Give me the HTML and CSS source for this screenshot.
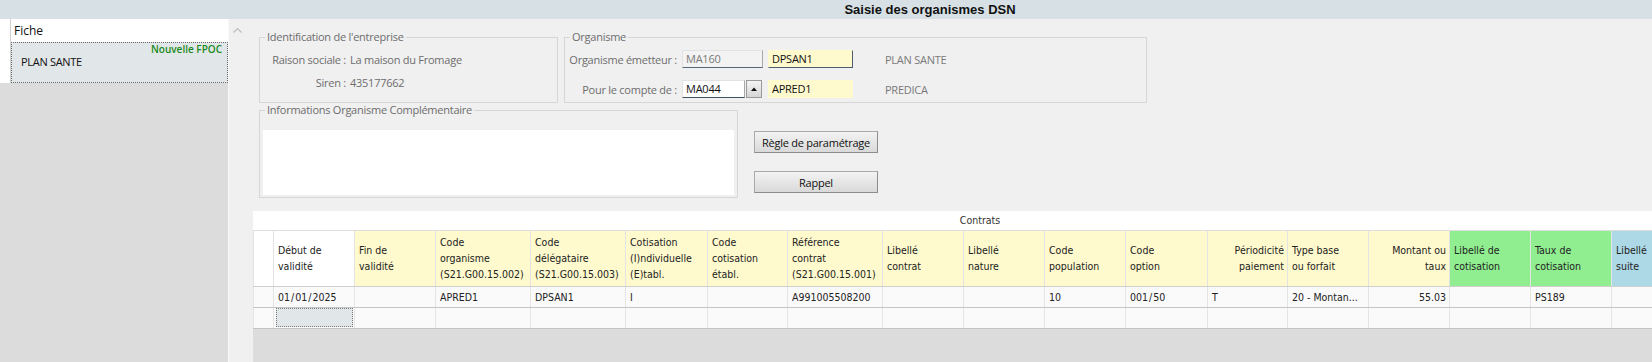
FILE: index.html
```html
<!DOCTYPE html>
<html>
    <head>
        <meta charset="utf-8">
        <title>Saisie des organismes DSN</title>
        <link rel="stylesheet" href="styles.css">
    </head>
    <body>
        <div class="titlebar">Saisie des organismes DSN</div>

        <div class="main">
            <!-- liste des fiches -->
            <div class="sidebar">
                <div class="side_head">
                    <span class="side_gutter"></span>
                    <span class="side_title">Fiche</span>
                </div>
                <div class="side_row">
                    <span class="side_gutter"></span>
                    <div class="fiche">
                        <span class="fiche_tag">Nouvelle FPOC</span>
                        <span class="fiche_name">PLAN SANTE</span>
                    </div>
                </div>
            </div>

            <div class="content">
                <svg class="scroll_up" width="9" height="6" viewBox="0 0 9 6"><polyline points="0.5,5.5 4.5,1.5 8.5,5.5" fill="none" stroke="#bdbdbd" stroke-width="1.2"/></svg>

                <div class="form_row">
                    <fieldset class="box box_ident">
                        <legend>Identification de l'entreprise</legend>
                        <div class="ident_line"><span class="lbl">Raison sociale :</span><span class="val">La maison du Fromage</span></div>
                        <div class="ident_line"><span class="lbl">Siren :</span><span class="val">435177662</span></div>
                    </fieldset>

                    <fieldset class="box box_org">
                        <legend>Organisme</legend>
                        <div class="org_line">
                            <span class="lbl">Organisme émetteur :</span>
                            <span class="field f_code f_disabled">MA160</span>
                            <span class="field f_yellow f_edged">DPSAN1</span>
                            <span class="org_name">PLAN SANTE</span>
                        </div>
                        <div class="org_line">
                            <span class="lbl">Pour le compte de :</span>
                            <span class="field f_combo">MA044</span>
                            <span class="spin"><svg width="14" height="16" viewBox="0 0 14 16"><polygon points="4,10 7,6.5 10,10" fill="#111"/></svg></span>
                            <span class="field f_yellow f_after_spin">APRED1</span>
                            <span class="org_name">PREDICA</span>
                        </div>
                    </fieldset>
                </div>

                <div class="form_row2">
                    <fieldset class="box box_info">
                        <legend>Informations Organisme Complémentaire</legend>
                        <div class="info_text"></div>
                    </fieldset>
                    <div class="buttons">
                        <button>Règle de paramétrage</button>
                        <button>Rappel</button>
                    </div>
                </div>

                <!-- grille des contrats -->
                <div class="grid">
                    <div class="grid_caption">Contrats</div>
                    <table>
                        <colgroup>
                            <col style="width:20px"><col style="width:81px"><col style="width:81px"><col style="width:95px">
                            <col style="width:95px"><col style="width:82px"><col style="width:80px"><col style="width:95px">
                            <col style="width:81px"><col style="width:81px"><col style="width:81px"><col style="width:82px">
                            <col style="width:80px"><col style="width:81px"><col style="width:81px"><col style="width:81px">
                            <col style="width:81px"><col style="width:81px">
                        </colgroup>
                        <tr>
                            <th class="h_white"></th>
                            <th class="h_white">Début de<br>validité</th>
                            <th>Fin de<br>validité</th>
                            <th>Code<br>organisme<br>(S21.G00.15.002)</th>
                            <th>Code<br>délégataire<br>(S21.G00.15.003)</th>
                            <th>Cotisation<br>(I)ndividuelle<br>(E)tabl.</th>
                            <th>Code<br>cotisation<br>établ.</th>
                            <th>Référence<br>contrat<br>(S21.G00.15.001)</th>
                            <th>Libellé<br>contrat</th>
                            <th>Libellé<br>nature</th>
                            <th>Code<br>population</th>
                            <th>Code<br>option</th>
                            <th class="right">Périodicité<br>paiement</th>
                            <th>Type base<br>ou forfait</th>
                            <th class="right">Montant ou<br>taux</th>
                            <th class="h_green">Libellé de<br>cotisation</th>
                            <th class="h_green">Taux de<br>cotisation</th>
                            <th class="h_blue">Libellé<br>suite</th>
                        </tr>
                        <tr>
                            <td></td>
                            <td>01<span class="slash">/</span>01<span class="slash">/</span>2025</td>
                            <td></td>
                            <td>APRED1</td>
                            <td>DPSAN1</td>
                            <td>I</td>
                            <td></td>
                            <td>A991005508200</td>
                            <td></td>
                            <td></td>
                            <td>10</td>
                            <td>001<span class="slash">/</span>50</td>
                            <td>T</td>
                            <td>20 - Montan...</td>
                            <td class="right">55.03</td>
                            <td></td>
                            <td>PS189</td>
                            <td></td>
                        </tr>
                        <tr>
                            <td></td>
                            <td class="focus"><div class="focus_box"></div></td>
                            <td></td><td></td><td></td><td></td><td></td><td></td><td></td>
                            <td></td><td></td><td></td><td></td><td></td><td></td><td></td>
                            <td></td><td></td>
                        </tr>
                    </table>
                </div>
            </div>
        </div>
    </body>
</html>
```

FILE: styles.css
```css
* {
    box-sizing: border-box;
}
body {
    margin: 0;
    width: 1652px;
    height: 362px;
    overflow: hidden;
    background-color: #f0f0f0;
    font-family: "Open Sans", "Noto Sans", sans-serif;
    font-size: 11px;
    color: #6d6d6d;
}
.titlebar {
    height: 19px;
    line-height: 19px;
    padding-left: 208px;
    background-color: #d6e0e5;
    text-align: center;
    font-family: "Liberation Sans", Arial, sans-serif;
    font-weight: bold;
    font-size: 13px;
    color: #111;
}
.main {
    display: flex;
    height: 343px;
}

/* fiches */
.sidebar {
    width: 229px;
    flex: none;
    background-color: #dcdcdc;
    border-right: 1px solid #f8f8f8;
}
.side_head {
    display: flex;
    height: 23px;
    background-color: #fff;
}
.side_gutter {
    width: 11px;
    flex: none;
    background-color: #fff;
    border-right: 1px solid #d0d0d0;
}
.side_title {
    padding-left: 3px;
    line-height: 23px;
    font-size: 12px;
    color: #111;
}
.side_row {
    display: flex;
    height: 41px;
    background-color: #fff;
}
.fiche {
    flex: 1;
    background-color: #e1e6e8;
    border: 1px dotted #6a6a6a;
}
.fiche_tag {
    display: block;
    padding-right: 5px;
    text-align: right;
    font-size: 10px;
    line-height: 12px;
    font-weight: 600;
    color: #1b8a1b;
}
.fiche_name {
    display: block;
    padding-left: 9px;
    line-height: 14px;
    letter-spacing: -0.3px;
    color: #111;
}

/* formulaire */
.content {
    flex: 1;
    min-width: 0;
    position: relative;
}
.scroll_up {
    position: absolute;
    left: 4px;
    top: 8px;
}
.form_row {
    display: flex;
    gap: 6px;
    padding-top: 11px;
    padding-left: 30px;
    letter-spacing: -0.25px;
}
.box {
    margin: 0;
    padding: 0;
    min-width: 0;
    border: 1px solid #d6d6d6;
}
.box legend {
    margin-left: 5px;
    padding: 0 2px;
    line-height: 14px;
    color: #6d6d6d;
}
.box_ident {
    width: 299px;
    padding-top: 4px;
}
.ident_line {
    display: flex;
    align-items: center;
    height: 23px;
    white-space: nowrap;
}
.ident_line .lbl {
    width: 86px;
    flex: none;
    text-align: right;
}
.ident_line .val {
    margin-left: 4px;
}
.box_org {
    width: 583px;
    padding-top: 3px;
    padding-bottom: 1px;
}
.org_line {
    display: flex;
    align-items: center;
    height: 24px;
    white-space: nowrap;
}
.org_line + .org_line {
    margin-top: 6px;
}
.org_line .lbl {
    width: 112px;
    flex: none;
    text-align: right;
}
.field {
    flex: none;
    height: 18px;
    line-height: 16px;
    padding-left: 3px;
    margin-left: 5px;
    color: #111;
    border: 1px solid transparent;
}
.f_code {
    width: 81px;
}
.f_disabled {
    background-color: #f3f3f3;
    color: #7a7a7a;
    border-color: #e2e2e2 #a8a8a8 #56697a #e2e2e2;
}
.f_combo {
    width: 63px;
    background-color: #fff;
    border-color: #e2e2e2 #a8a8a8 #3d5266 #e2e2e2;
}
.spin {
    flex: none;
    width: 16px;
    height: 18px;
    margin-left: 1px;
    display: flex;
    align-items: center;
    justify-content: center;
    border: 1px solid #9a9a9a;
    background: linear-gradient(#f4f4f4, #d6d6d6);
}
.f_yellow {
    width: 85px;
    background-color: #fffacd;
}
.f_edged {
    border-color: #fffacd #4d5d6d #4d5d6d #fffacd;
}
.f_after_spin {
    margin-left: 6px;
}
.org_name {
    margin-left: 32px;
    color: #7a7a7a;
}
.form_row2 {
    display: flex;
    align-items: flex-start;
    padding-left: 30px;
    letter-spacing: -0.25px;
}
.box_info {
    width: 479px;
}
.info_text {
    height: 65px;
    margin: 13px 3px 2px 3px;
    background-color: #fff;
}
.buttons {
    display: flex;
    flex-direction: column;
    gap: 18px;
    margin-left: 16px;
    padding-top: 28px;
}
.buttons button {
    width: 124px;
    height: 22px;
    padding: 0;
    border: 1px solid #a9a9a9;
    border-right-color: #8c8c8c;
    border-bottom-color: #8c8c8c;
    background: linear-gradient(#f3f3f3, #d9d9d9);
    font-family: "Open Sans", "Noto Sans", sans-serif;
    font-size: 11px;
    letter-spacing: -0.25px;
    color: #111;
}

/* grille */
.grid {
    margin: 13px 0 0 24px;
    height: 151px;
    overflow: hidden;
    background-color: #dcdcdc;
    font-family: "DejaVu Sans Condensed", "DejaVu Sans", sans-serif;
    font-stretch: condensed;
    font-size: 10.5px;
    color: #222;
}
.grid_caption {
    height: 20px;
    line-height: 19px;
    padding-left: 55px;
    background-color: #fff;
    border-bottom: 1px solid #dedede;
    text-align: center;
    color: #333;
}
.grid table {
    width: 1439px;
    table-layout: fixed;
    border-collapse: collapse;
    background-color: #fff;
}
.grid th {
    height: 55px;
    padding: 0 3px 0 4px;
    line-height: 16px;
    text-align: left;
    font-weight: normal;
    white-space: nowrap;
    overflow: hidden;
    background-color: #fffacd;
    border-left: 1px solid #e3e3e3;
    border-bottom: 1px solid #cfcfcf;
}
.grid th.h_white {
    background-color: #fff;
}
.grid th.h_green {
    background-color: #90ee90;
}
.grid th.h_blue {
    background-color: #add8e6;
}
.grid td {
    height: 21px;
    padding: 0 3px 0 4px;
    white-space: nowrap;
    overflow: hidden;
    background-color: #fafafa;
    border-left: 1px solid #e5e5e5;
    border-bottom: 1px solid #c4c4c4;
}
.grid .right {
    text-align: right;
}
.slash {
    margin: 0 1px;
}
.grid td.focus {
    padding: 0 1px 0 2px;
}
.focus_box {
    height: 19px;
    background-color: #e1e6e8;
    border: 1px dotted #7a7a7a;
}
```
